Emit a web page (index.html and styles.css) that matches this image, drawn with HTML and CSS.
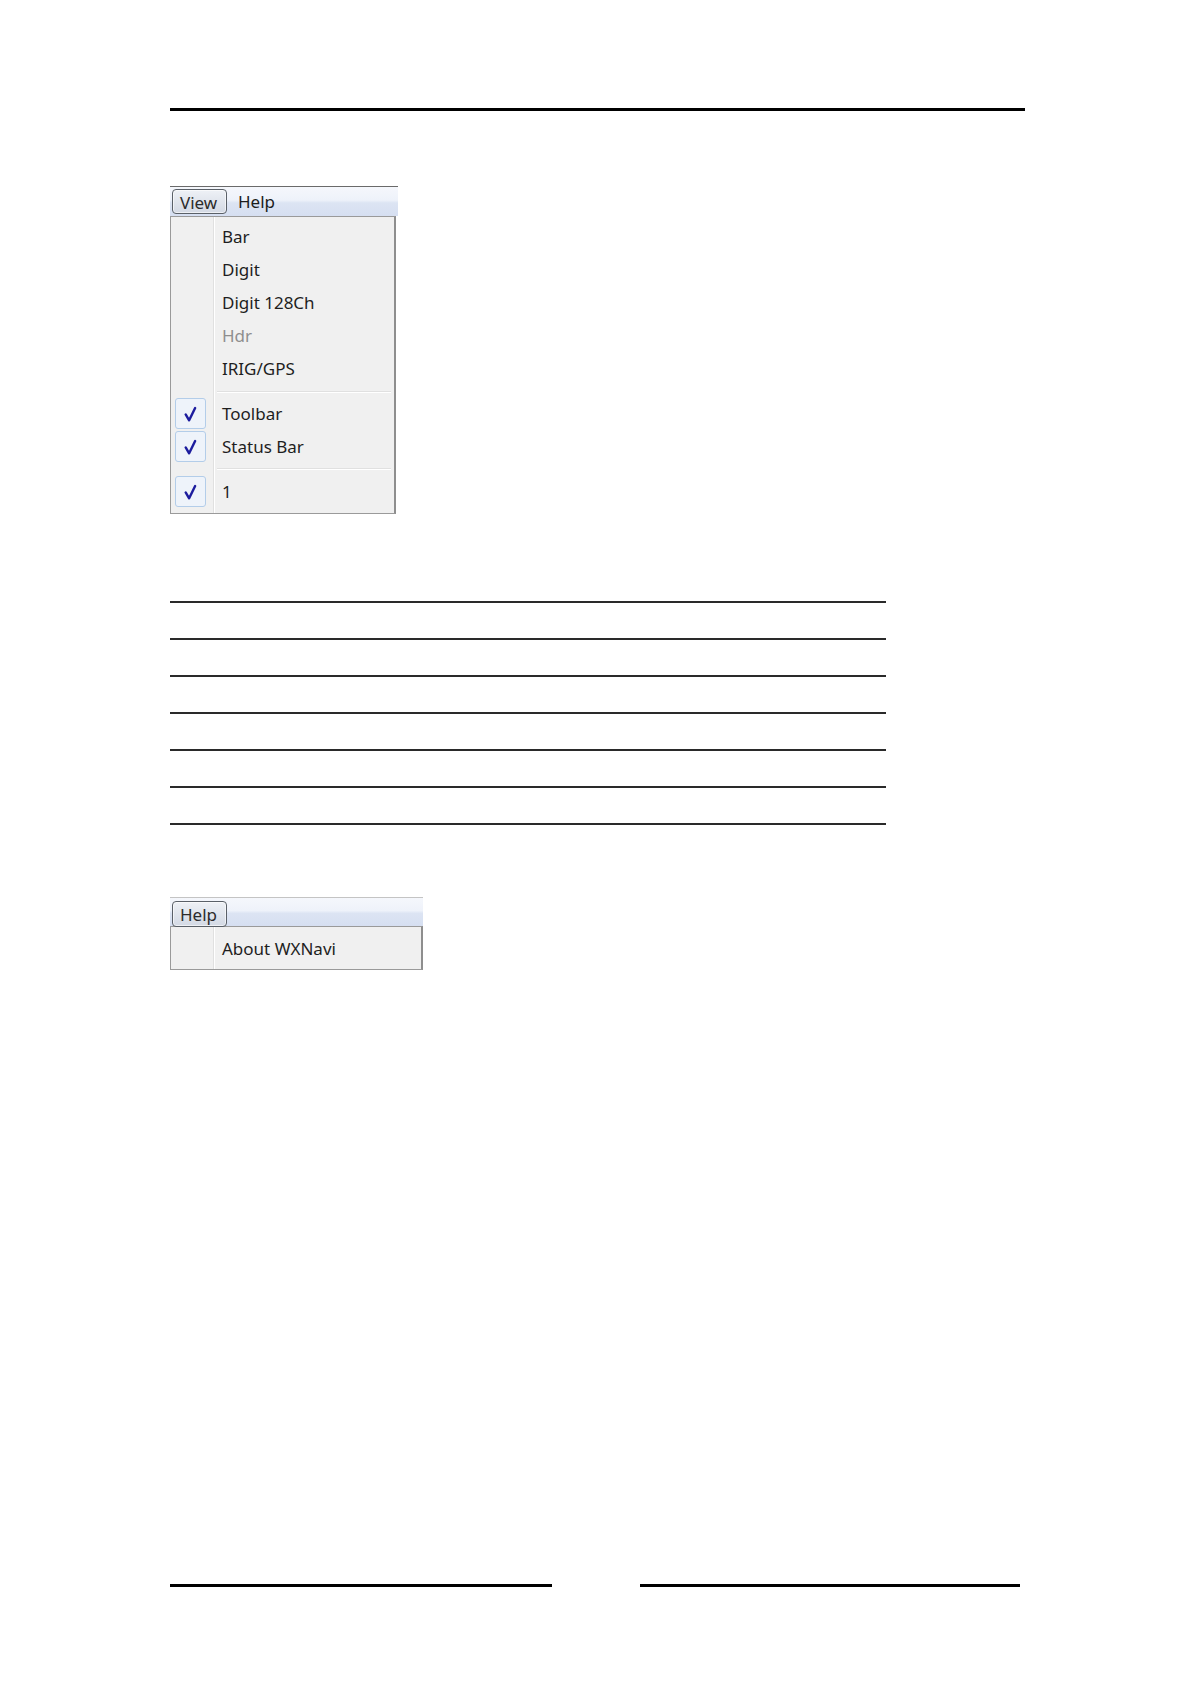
FILE: index.html
```html
<!DOCTYPE html>
<html lang="en">
<head>
<meta charset="utf-8">
<title>View / Help menus</title>
<link rel="stylesheet" href="styles.css">
</head>
<body>
<div class="page">
  <div class="rule-top"></div>

  <div class="menu menu-view">
    <div class="menubar">
      <span class="mb-item active">View</span>
      <span class="mb-item">Help</span>
    </div>
    <div class="dropdown">
      <div class="row"><span class="gutter"></span><span class="label">Bar</span></div>
      <div class="row"><span class="gutter"></span><span class="label">Digit</span></div>
      <div class="row"><span class="gutter"></span><span class="label">Digit 128Ch</span></div>
      <div class="row disabled"><span class="gutter"></span><span class="label">Hdr</span></div>
      <div class="row"><span class="gutter"></span><span class="label">IRIG/GPS</span></div>
      <div class="sep sep-a"></div>
      <div class="row"><span class="gutter"><span class="check"><svg viewBox="0 0 30 30" width="30" height="30"><path d="M10 15.5 L13.6 21.5 L19.8 8.8" fill="none" stroke="#1c1c9e" stroke-width="2.5" stroke-linecap="round" stroke-linejoin="round"/></svg></span></span><span class="label">Toolbar</span></div>
      <div class="row"><span class="gutter"><span class="check"><svg viewBox="0 0 30 30" width="30" height="30"><path d="M10 15.5 L13.6 21.5 L19.8 8.8" fill="none" stroke="#1c1c9e" stroke-width="2.5" stroke-linecap="round" stroke-linejoin="round"/></svg></span></span><span class="label">Status Bar</span></div>
      <div class="sep sep-b"></div>
      <div class="row"><span class="gutter"><span class="check"><svg viewBox="0 0 30 30" width="30" height="30"><path d="M10 15.5 L13.6 21.5 L19.8 8.8" fill="none" stroke="#1c1c9e" stroke-width="2.5" stroke-linecap="round" stroke-linejoin="round"/></svg></span></span><span class="label">1</span></div>
    </div>
  </div>

  <div class="lines">
    <div class="lrow"></div>
    <div class="lrow"></div>
    <div class="lrow"></div>
    <div class="lrow"></div>
    <div class="lrow"></div>
    <div class="lrow"></div>
  </div>

  <div class="menu menu-help">
    <div class="menubar">
      <span class="mb-item active">Help</span>
    </div>
    <div class="dropdown">
      <div class="row"><span class="gutter"></span><span class="label">About WXNavi</span></div>
    </div>
  </div>

  <div class="rule-bottom">
    <div class="rb rb-left"></div>
    <div class="rb rb-right"></div>
  </div>
</div>
</body>
</html>
```

FILE: styles.css
```css
html, body {
  margin: 0;
  padding: 0;
  background: #ffffff;
}

.page {
  padding-top: 108px;
  margin-left: 170px;
  width: 855px;
  font-family: "Noto Sans", "Open Sans", "DejaVu Sans", sans-serif;
}

.rule-top {
  height: 3px;
  background: #000;
  width: 855px;
}

/* ---------- menus ---------- */
.menu {
  margin-top: 75px;
}

.menu-view { width: 228px; }
.menu-help { width: 253px; margin-top: 72px; }

.menubar {
  display: flex;
  align-items: center;
  height: 29px;
  border-top: 1px solid #6a6a6a;
  background: linear-gradient(#f5f7fc 0%, #eef2fa 45%, #dce4f3 55%, #d6dff1 100%);
  padding-left: 2px;
  box-sizing: content-box;
}

.menu-help .menubar {
  height: 28px;
  border-top-color: #c4c4c4;
}

.mb-item {
  font-size: 17px;
  color: #1c1c1c;
  padding: 0 6px;
  line-height: 25px;
  height: 25px;
  border: 1px solid transparent;
}

.mb-item.active {
  width: 55px;
  box-sizing: border-box;
  padding: 0 0 0 7px;
  color: #2b2b2b;
  border: 1px solid #5a6068;
  border-radius: 4px;
  background: linear-gradient(#eef1f6, #d3d9e4);
  box-shadow: inset 0 0 0 1px rgba(255,255,255,0.6);
}

.menu-view .mb-item + .mb-item {
  margin-left: 4px;
}

.menu-help .mb-item.active {
  position: relative;
  top: 2px;
  height: 26px;
}

.dropdown {
  width: 226px;
  box-sizing: border-box;
  border: 1px solid #9a9a9a;
  border-right: 2px solid #8e8e8e;
  padding: 3px 0 5px 0;
  background:
    linear-gradient(to right,
      #f0f0f0 0, #f0f0f0 42px,
      #e0e0e0 42px, #e0e0e0 43px,
      #ffffff 43px, #ffffff 44px,
      #f0f0f0 44px);
}

.menu-help .dropdown {
  width: 253px;
  padding: 5px 0 4px 0;
}

.row {
  display: flex;
  align-items: center;
  height: 33px;
}

.gutter {
  flex: none;
  width: 44px;
  height: 33px;
  display: flex;
  align-items: center;
}

.label {
  padding-left: 7px;
  font-size: 17px;
  color: #1e1e1e;
  white-space: nowrap;
}

.row.disabled .label {
  color: #8e8e8e;
}

.check {
  margin-left: 4px;
  width: 31px;
  height: 31px;
  box-sizing: border-box;
  border: 1px solid #b3cde9;
  border-radius: 3px;
  background: #eef3fa;
  display: flex;
  align-items: center;
  justify-content: center;
}

.check svg { display: block; }

.sep {
  margin-left: 46px;
  margin-right: 3px;
  border-top: 1px solid #e0e0e0;
  border-bottom: 1px solid #ffffff;
}

.sep-a { margin-top: 6px; margin-bottom: 4px; }
.sep-b { margin-top: 5px; margin-bottom: 5px; }

/* ---------- ruled lines ---------- */
.lines {
  margin-top: 87px;
  width: 716px;
  border-top: 2px solid #2a2a2a;
}

.lrow {
  height: 35px;
  border-bottom: 2px solid #2a2a2a;
}

/* ---------- bottom rule ---------- */
.rule-bottom {
  margin-top: 614px;
  display: flex;
  gap: 88px;
  width: 855px;
}

.rb {
  height: 3px;
  background: #000;
}

.rb-left { width: 382px; }
.rb-right { width: 380px; }
```
